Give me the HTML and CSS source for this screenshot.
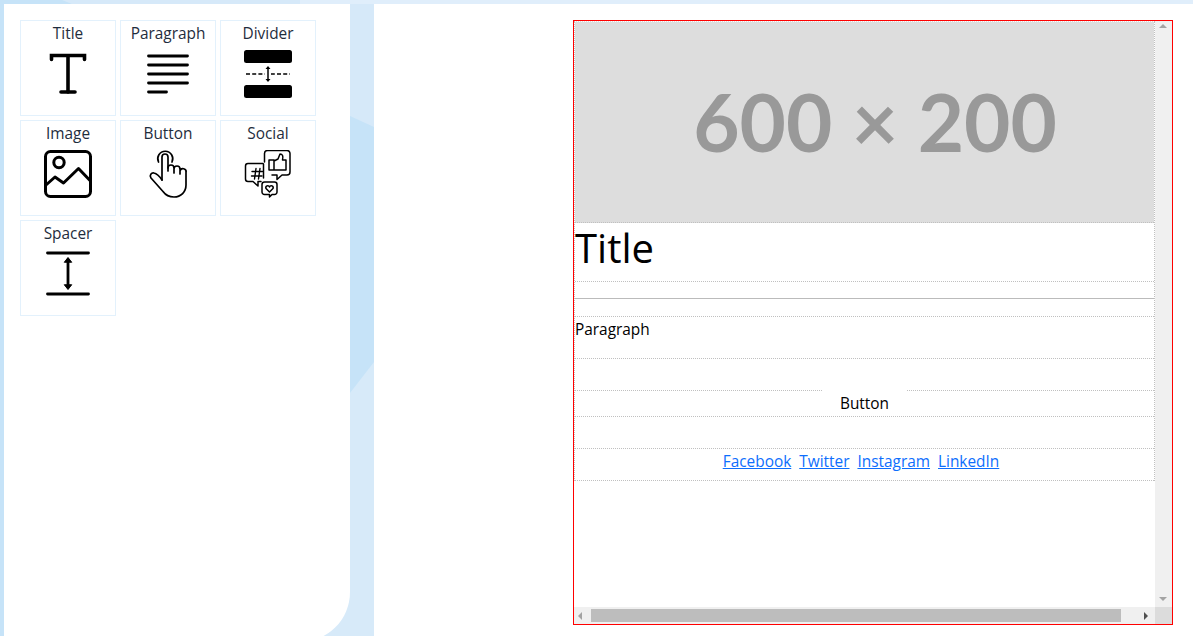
FILE: index.html
```html
<!DOCTYPE html>
<html lang="en">
<head>
    <meta charset="UTF-8">
    <title>Email Builder</title>
    <link rel="stylesheet" href="styles.css">
</head>
<body>
    <svg class="backdrop" viewBox="0 0 1193 636">
        <polygon points="62,0 350,116 374,127 374,0" fill="#d6e9f9"/>
        <polygon points="300,0 1193,0 1193,4 300,4" fill="#e0eefb"/>
        <polygon points="350,393 374,362 374,636 320,636" fill="#d7eaf9"/>
    </svg>
    <div class="builder">
        <aside class="sidebar">
            <div class="blocks">
                <div class="block">
                    <span>Title</span>
                    <svg class="icon" viewBox="0 0 48 48" fill="none" stroke="#000" stroke-width="3.600" stroke-linecap="round">
                        <path d="M7.500 9.500V5.500H40.500V9.500"/><path d="M24 6V42"/><path d="M17 42H31"/>
                    </svg>
                </div>
                <div class="block">
                    <span>Paragraph</span>
                    <svg class="icon" viewBox="0 0 48 48" fill="none" stroke="#000" stroke-width="2.800" stroke-linecap="round">
                        <path d="M4.500 6H43.500"/><path d="M4.500 15H43.500"/><path d="M4.500 24H43.500"/><path d="M4.500 33H43.500"/><path d="M4.500 42H22.500"/>
                    </svg>
                </div>
                <div class="block">
                    <span>Divider</span>
                    <svg class="icon" viewBox="0 0 48 48">
                        <rect x="0" y="0" width="48" height="13" rx="2.500" fill="#000"/>
                        <rect x="0" y="35" width="48" height="13" rx="2.500" fill="#000"/>
                        <path d="M2 24H46" stroke="#000" stroke-width="1.500" stroke-dasharray="4 2.200" fill="none"/>
                        <path d="M24 16V32" stroke="#fff" stroke-width="6"/>
                        <path d="M24 17V31" stroke="#000" stroke-width="1.500"/>
                        <path d="M21.500 19L24 16L26.500 19ZM21.500 29L24 32L26.500 29Z" fill="#000"/>
                    </svg>
                </div>
                <div class="block">
                    <span>Image</span>
                    <svg class="icon" viewBox="0 0 48 48" fill="none" stroke="#000" stroke-width="3">
                        <rect x="1.500" y="1.500" width="45" height="45" rx="5"/>
                        <circle cx="15" cy="12.500" r="5.200"/>
                        <path d="M2 35L11 27L19.500 33L34.500 18.500L46.500 31" stroke-linejoin="round"/>
                    </svg>
                </div>
                <div class="block">
                    <span>Button</span>
                    <svg class="icon" viewBox="0 0 48 48" fill="none" stroke="#000" stroke-width="1.700" stroke-linecap="round" stroke-linejoin="round">
                        <path d="M18 30V7a3 3 0 0 1 6 0V21"/>
                        <path d="M24 18a3 3 0 0 1 6 0V23M30 19a3 3 0 0 1 6 0V24M36 21a3 3 0 0 1 6 1.500V35C42 42 37 47 30 47c-5 0-8.500-2-11-5.500L7 28c-2-3 .5-5.500 3-5 3 .5 6 4 8 7"/>
                        <path d="M14.500 12a7.500 7.500 0 1 1 13.500 0"/>
                    </svg>
                </div>
                <div class="block">
                    <span>Social</span>
                    <svg class="icon" viewBox="0 0 48 48" fill="none" stroke="#000" stroke-width="1.500" stroke-linecap="round" stroke-linejoin="round">
                        <path d="M20.500 12V3.500a3 3 0 0 1 3-3H43a3 3 0 0 1 3 3V22a3 3 0 0 1-3 3H38L33 29.500V25H28"/>
                        <path d="M25 20H30V10H25ZM30 11L34 9L36 4C38.500 4 39.500 6 38.500 10H42V20H30"/>
                        <path d="M19 13.500H4a2.500 2.500 0 0 0-2.500 2.500V29A2.500 2.500 0 0 0 4 31.500H9L14 36V31.500H17"/>
                        <path d="M19.500 14v14"/>
                        <path d="M12 18.500L10.500 29M16 18.500L14.500 29M8 21.500H18.500M7.500 26H18" stroke-width="1.400"/>
                        <path d="M20.500 32H30.500a2.500 2.500 0 0 1 2.500 2.500V42a2.500 2.500 0 0 1-2.500 2.500H28L25.500 47V44.500H20.500A2.500 2.500 0 0 1 18 42V34.500A2.500 2.500 0 0 1 20.500 32Z"/>
                        <path d="M25.500 42L22 38.500C21 36 24.500 34.500 25.500 37C26.500 34.500 30 36 29 38.500Z"/>
                    </svg>
                </div>
                <div class="block">
                    <span>Spacer</span>
                    <svg class="icon" viewBox="0 0 48 48" fill="none" stroke="#000" stroke-width="2.800" stroke-linecap="round">
                        <path d="M3.500 3H44.500"/><path d="M3.500 44H44.500"/><path d="M24 10V37"/>
                        <path d="M20.500 12L24 7.500L27.500 12ZM20.500 35L24 39.500L27.500 35Z" fill="#000" stroke-width="1"/>
                    </svg>
                </div>
            </div>
        </aside>
        <main class="stage">
            <div class="frame">
                <div class="viewport">
                    <div class="canvas">
                        <div class="rows">
                            <div class="row placeholder"><span>600 × 200</span></div>
                            <div class="row title">Title</div>
                            <div class="row divider"><hr></div>
                            <div class="row paragraph">Paragraph</div>
                            <div class="row spacer"></div>
                            <div class="row button-row"><a class="btn">Button</a></div>
                            <div class="row spacer"></div>
                            <div class="row social">
                                <a href="#">Facebook</a>
                                <a href="#">Twitter</a>
                                <a href="#">Instagram</a>
                                <a href="#">LinkedIn</a>
                            </div>
                        </div>
                    </div>
                    <div class="scroll-v">
                        <i class="arrow up"></i>
                        <i class="arrow down"></i>
                    </div>
                </div>
                <div class="scroll-h">
                    <i class="arrow left"></i>
                    <div class="thumb"></div>
                    <i class="arrow right"></i>
                    <div class="corner"></div>
                </div>
            </div>
        </main>
    </div>
</body>
</html>
```

FILE: styles.css
```css
* {
    box-sizing: border-box;
}
html, body {
    height: 100%;
}
body {
    margin: 0;
    overflow: hidden;
    font-family: "Open Sans", sans-serif;
    font-size: 15.4px;
    color: #000;
    background: #c6e3f8;
}
.backdrop {
    position: fixed;
    top: 0;
    left: 0;
    width: 1193px;
    height: 636px;
}
.builder {
    position: relative;
    display: flex;
    gap: 24px;
    height: 100%;
    padding: 4px 0 0 4px;
}
.sidebar {
    flex: none;
    width: 346px;
    height: 638px;
    padding: 16px;
    background: #fff;
    border-bottom-right-radius: 50px;
}
.blocks {
    display: grid;
    grid-template-columns: repeat(3, 96px);
    grid-auto-rows: 96px;
    gap: 4px;
}
.block {
    display: flex;
    flex-direction: column;
    align-items: center;
    padding-top: 2px;
    border: 1px solid #e3f1fc;
    color: #1f2d3d;
    line-height: 21px;
}
.icon {
    width: 48px;
    height: 48px;
    margin-top: 6px;
}
.stage {
    flex: 1;
    padding: 16px 20px 11px 199px;
    background: #fff;
}
.frame {
    display: flex;
    flex-direction: column;
    width: 600px;
    height: 605px;
    border: 1px solid #f00;
}
.viewport {
    display: flex;
    flex: 1;
    min-height: 0;
}
.canvas {
    flex: 1;
    min-width: 0;
}
.rows {
    border-left: 1px dotted #c0c0c0;
    border-right: 1px dotted #c0c0c0;
}
.row {
    border-bottom: 1px dotted #c0c0c0;
}
.placeholder {
    height: 202px;
    overflow: hidden;
    border-top: 1px dotted #fff;
    background: #ddd;
    color: #999;
    font-family: Lato, sans-serif;
    font-size: 80px;
    font-weight: 700;
    line-height: 198px;
}
.placeholder span {
    display: block;
    width: 600px;
    text-align: center;
}
.title {
    height: 59px;
    font-size: 40px;
    line-height: 50px;
}
.divider {
    display: flex;
    align-items: center;
    height: 35px;
    padding-bottom: 1px;
}
.divider hr {
    width: 100%;
    margin: 0;
    border: 0;
    border-top: 1px solid #bbb;
}
.paragraph {
    height: 42px;
    padding-top: 2px;
    line-height: 21px;
}
.spacer {
    height: 32px;
}
.button-row {
    display: flex;
    justify-content: center;
    height: 26px;
}
.btn {
    width: 83px;
    margin-top: -1px;
    padding-top: 3px;
    background: #fff;
    line-height: 21px;
    text-align: center;
}
.social {
    height: 32px;
    padding: 2px 7px 0 0;
    line-height: 21px;
    text-align: center;
}
.social a {
    margin: 0 2px;
    color: #0d6efd;
}
.scroll-v {
    position: relative;
    flex: none;
    width: 17px;
    background: #f0f0f0;
}
.scroll-h {
    position: relative;
    display: flex;
    align-items: center;
    height: 17px;
    background: #f0f0f0;
}
.thumb {
    width: 530px;
    height: 13px;
    margin-left: 17px;
    background: #bdbdbd;
}
.corner {
    position: absolute;
    right: 0;
    top: 0;
    width: 17px;
    height: 17px;
    background: #dcdcdc;
}
.arrow {
    position: absolute;
    width: 0;
    height: 0;
    border: 4px solid transparent;
}
.arrow.up {
    top: 3px;
    left: 4px;
    border-top: 0;
    border-bottom-color: #a3a3a3;
}
.arrow.down {
    bottom: 6px;
    left: 4px;
    border-bottom: 0;
    border-top-color: #a3a3a3;
}
.arrow.left {
    left: 4px;
    top: 5px;
    border-left: 0;
    border-right-color: #a3a3a3;
}
.arrow.right {
    left: 570px;
    top: 5px;
    border-right: 0;
    border-left-color: #505050;
}
```
